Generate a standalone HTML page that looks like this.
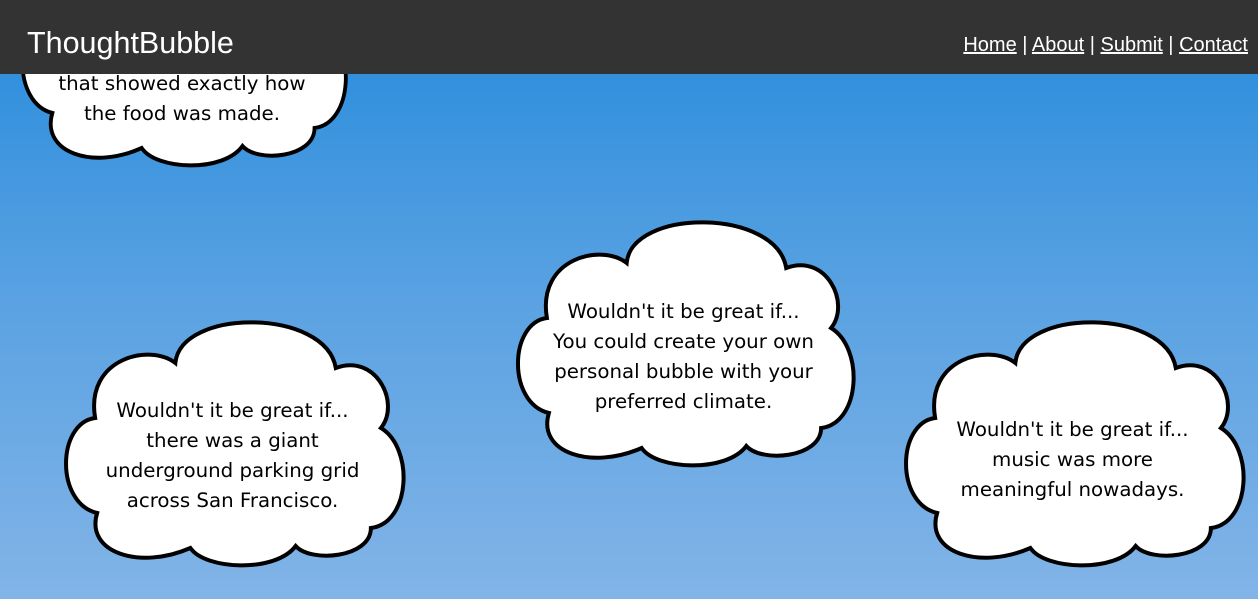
<!DOCTYPE html>
<html><head><meta charset="utf-8"><style>
html,body{margin:0;padding:0;width:1258px;height:599px;overflow:hidden}
body{background:linear-gradient(to bottom,#3290dd 74px,#5aa2e2 300px,#82b4e7 599px);position:relative;font-family:"DejaVu Sans",Verdana,sans-serif}
header{position:absolute;left:0;top:0;width:1258px;height:74px;background:#333;z-index:5}
.title{position:absolute;left:27px;top:26px;font:30.5px "Liberation Sans",Arial,sans-serif;color:#fff;line-height:34px}
.nav{position:absolute;right:10px;top:33px;font:20px "Liberation Sans",Arial,sans-serif;color:#fff;line-height:24px}
.nav a{color:#fff;text-decoration:underline}
.cloud{position:absolute}
.cloud svg{position:absolute;left:0;top:0;overflow:visible}
.txt{position:absolute;left:-20px;width:calc(100% + 40px);text-align:center;font-size:19.8px;line-height:30px;color:#000}
</style></head><body>
<svg width="0" height="0" style="position:absolute"><defs>
<path id="c" d="M40,110 C30,50 95,35 120,55 C125,0 270,0 280,60 C320,45 345,95 325,120 C358,140 355,215 315,220 C315,250 255,255 240,238 C220,265 150,262 135,240 C85,262 30,245 42,205 C0,195 2,115 40,110 Z"/>
</defs></svg>

<div class="cloud" style="left:12px;top:-92px;width:340px;height:262px">
<svg width="340" height="262" viewBox="0 0 354 262" preserveAspectRatio="none"><use href="#c" fill="#fff" stroke="#000" stroke-width="4" vector-effect="non-scaling-stroke"/></svg>
<div class="txt" style="top:101px">Wouldn't it be great if...<br>there were a label on food<br>that showed exactly how<br>the food was made.</div>
</div>

<div class="cloud" style="left:55px;top:308px;width:355px;height:262px">
<svg width="355" height="262" viewBox="0 0 354 262" preserveAspectRatio="none"><use href="#c" fill="#fff" stroke="#000" stroke-width="4" vector-effect="non-scaling-stroke"/></svg>
<div class="txt" style="top:88px">Wouldn't it be great if...<br>there was a giant<br>underground parking grid<br>across San Francisco.</div>
</div>

<div class="cloud" style="left:507px;top:208px;width:353px;height:262px">
<svg width="353" height="262" viewBox="0 0 354 262" preserveAspectRatio="none"><use href="#c" fill="#fff" stroke="#000" stroke-width="4" vector-effect="non-scaling-stroke"/></svg>
<div class="txt" style="top:89px">Wouldn't it be great if...<br>You could create your own<br>personal bubble with your<br>preferred climate.</div>
</div>

<div class="cloud" style="left:895px;top:308px;width:355px;height:262px">
<svg width="355" height="262" viewBox="0 0 354 262" preserveAspectRatio="none"><use href="#c" fill="#fff" stroke="#000" stroke-width="4" vector-effect="non-scaling-stroke"/></svg>
<div class="txt" style="top:107px">Wouldn't it be great if...<br>music was more<br>meaningful nowadays.</div>
</div>

<header><div class="title">ThoughtBubble</div>
<div class="nav"><a>Home</a> | <a>About</a> | <a>Submit</a> | <a>Contact</a></div></header>
</body></html>
